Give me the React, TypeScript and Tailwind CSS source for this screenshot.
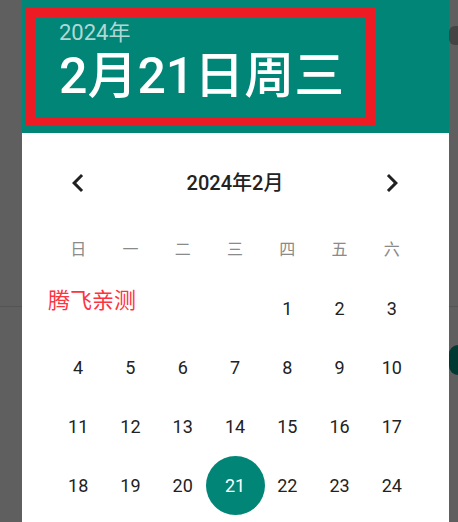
import * as React from 'react';

const weekDays = ['日', '一', '二', '三', '四', '五', '六'];

// February 2024 starts on a Thursday; only the visible rows are drawn
const days: (number | null)[] = [
  null, null, null, null, 1, 2, 3,
  4, 5, 6, 7, 8, 9, 10,
  11, 12, 13, 14, 15, 16, 17,
  18, 19, 20, 21, 22, 23, 24,
];

function ChevronLeft() {
  return (
    <svg width="36" height="36" viewBox="0 0 24 24" fill="currentColor">
      <path d="M15.41 7.41L14 6l-6 6 6 6 1.41-1.41L10.83 12z" />
    </svg>
  );
}

function ChevronRight() {
  return (
    <svg width="36" height="36" viewBox="0 0 24 24" fill="currentColor">
      <path d="M8.59 16.59L10 18l6-6-6-6-1.41 1.41L13.17 12z" />
    </svg>
  );
}

export default function App() {
  const selected = 21;

  return (
    <div
      className="flex h-[522px] w-full overflow-hidden bg-[#5f5f5f]"
      style={{ fontFamily: 'Roboto, "Noto Sans CJK SC", sans-serif' }}
    >
      {/* backdrop, left */}
      <div className="flex w-[22px] shrink-0 flex-col">
        <div className="h-[306px] shrink-0" />
        <div className="h-px bg-[#545454]" />
      </div>

      {/* dialog */}
      <div className="flex w-[427px] shrink-0 flex-col bg-white">
        <div className="h-[133px] shrink-0 bg-[#008577] pl-1 pt-2">
          <div className="h-[118px] w-[349px] border-[9px] border-[#ed1c24] pl-[24px] pt-[3px]">
            <div className="text-[22px] leading-[26px] text-white/70">2024年</div>
            <div className="mt-[2px] whitespace-nowrap text-[50px] font-medium leading-[56px] text-white">
              2月21日周三
            </div>
          </div>
        </div>

        <div className="relative flex flex-col pl-[30px]">
          <div className="mt-[26px] flex h-[48px] w-[366px] items-center justify-between">
            <div className="flex w-[52px] justify-center text-[#212121]">
              <ChevronLeft />
            </div>
            <div className="text-[20px] font-medium text-[#222]">2024年2月</div>
            <div className="flex w-[52px] justify-center text-[#212121]">
              <ChevronRight />
            </div>
          </div>

          <div className="mt-[13px] grid w-[366px] grid-cols-7 auto-rows-[59px]">
            {weekDays.map((d) => (
              <div
                key={d}
                className="flex items-center justify-center text-[16px] text-[#8a8a8a]"
              >
                {d}
              </div>
            ))}
            {days.map((d, i) => (
              <div key={i} className="flex items-center justify-center">
                {d === selected ? (
                  <div className="flex h-[59px] w-[59px] shrink-0 items-center justify-center rounded-full bg-[#008577] text-[18px] text-white">
                    {d}
                  </div>
                ) : (
                  <span className="text-[18px] text-[#222]">{d}</span>
                )}
              </div>
            ))}
          </div>

          <div
            className="absolute left-[26px] top-[154px] text-[22px] leading-[22px] text-[#ff3340]"
            style={{ fontFamily: '"Noto Sans CJK SC", sans-serif' }}
          >
            腾飞亲测
          </div>
        </div>
      </div>

      {/* backdrop, right */}
      <div className="flex flex-1 flex-col">
        <div className="mt-[26px] h-[19px] rounded-l-md bg-[#444]" />
        <div className="h-[261px]" />
        <div className="h-px bg-[#545454]" />
        <div className="mt-[38px] h-[30px] rounded-l-full bg-[#003a33]" />
      </div>
    </div>
  );
}
